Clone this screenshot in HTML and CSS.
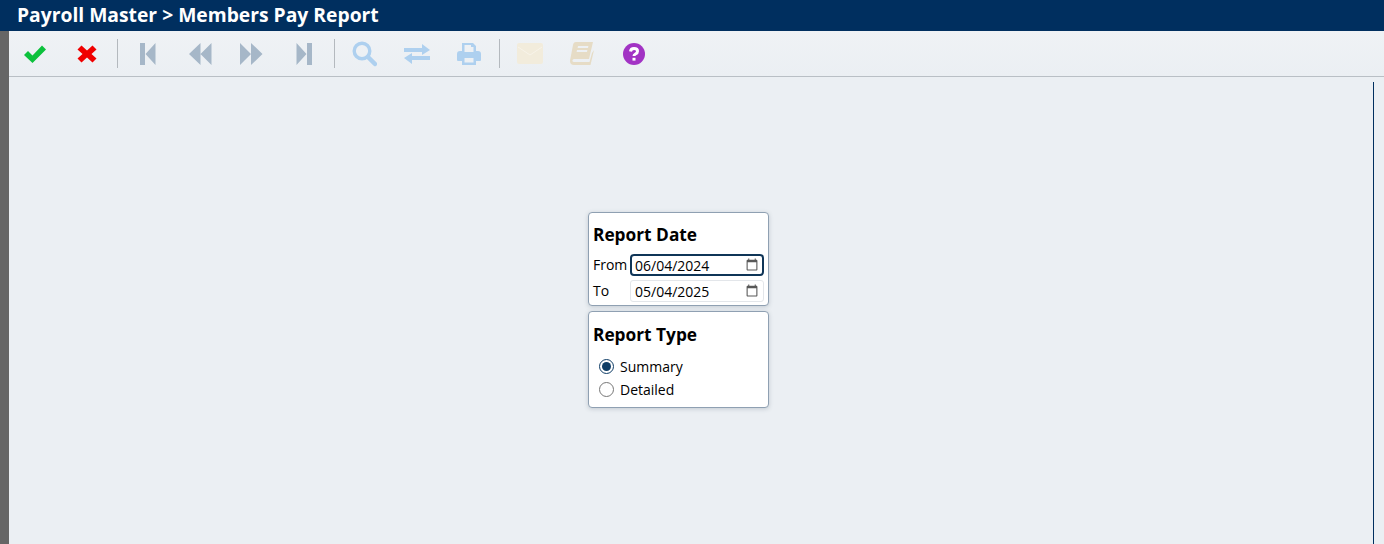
FILE: index.html
```html
<!DOCTYPE html>
<html lang="en">
<head>
<meta charset="utf-8">
<title>Members Pay Report</title>
<link rel="stylesheet" href="styles.css">
</head>
<body>
<header class="titlebar">Payroll Master &gt; Members Pay Report</header>
<div class="shell">
  <aside class="rail"></aside>
  <div class="workspace">
    <nav class="toolbar">
      <span class="tool"><svg viewBox="0 0 24 20" width="24" height="20"><path class="ok" d="M1 11 L5 7 L9.5 11.5 L19 1.5 L23 5.5 L9.5 19 Z"/></svg></span>
      <span class="tool"><svg viewBox="0 0 20 18" width="20" height="18"><path class="cancel" d="M4.5 0.5 L10 5.5 L15.5 0.5 L19.5 4.5 L14.5 9 L19.5 13.5 L15.5 17.5 L10 12.5 L4.5 17.5 L0.5 13.5 L5.5 9 L0.5 4.5 Z"/></svg></span>
      <span class="sep"></span>
      <span class="tool"><svg viewBox="0 0 16 22" width="16" height="22"><path class="nav" d="M0 0 H5 V22 H0 Z M15.500 0 V22 L5.500 11 Z"/></svg></span>
      <span class="tool"><svg viewBox="0 0 24 22" width="24" height="22"><path class="nav" d="M12.500 0 V22 L1 11 Z M23.500 0 V22 L12.500 11 Z"/></svg></span>
      <span class="tool"><svg viewBox="0 0 24 22" width="24" height="22"><path class="nav" d="M0 0 V22 L11 11 Z M11 0 V22 L22.500 11 Z"/></svg></span>
      <span class="tool"><svg viewBox="0 0 16 22" width="16" height="22"><path class="nav" d="M0.500 0 V22 L10.500 11 Z M11 0 H16 V22 H11 Z"/></svg></span>
      <span class="sep"></span>
      <span class="tool tool-left"><svg viewBox="0 0 25 26" width="25" height="26"><circle class="line-blue" cx="10" cy="10" r="7.800"/><path class="line-blue heavy" d="M16 16 L23 23"/></svg></span>
      <span class="tool"><svg viewBox="0 0 26 20" width="26" height="20"><path class="soft-blue" d="M0 4 H18 V0 L26 6 L18 11 V8 H0 Z M26 12 H8 V9 L0 14 L8 20 V16 H26 Z"/></svg></span>
      <span class="tool"><svg viewBox="0 0 24 22" width="24" height="22"><path class="soft-blue" fill-rule="evenodd" d="M5 0 H16 L19 3 V8 H21 Q24 8 24 11 V17 Q24 18 23 18 H19 V22 H5 V18 H1 Q0 18 0 17 V11 Q0 8 3 8 H5 Z M7.500 2 V9 H16.500 V4 H14 V2 Z M7.500 15 V19.500 H16.500 V15 Z"/></svg></span>
      <span class="sep"></span>
      <span class="tool"><svg viewBox="0 0 26 21" width="26" height="21"><rect class="mail" width="26" height="21" rx="2"/><path class="mail-flap" d="M1 4 L13 12 L25 4"/></svg></span>
      <span class="tool"><svg viewBox="0 0 24 23" width="24" height="23"><path class="book" fill-rule="evenodd" d="M6 0 H23 L19 17 H4 Q2.500 17 2.400 18.500 Q2.400 20 4 20 H19.500 L22 11 L24 8 L20.500 23 H4 Q0 23 0 19 Q0 18 0.500 16 L3 3 Q3.500 0 6 0 Z M8 4 L7.600 6 H18 L18.400 4 Z M7 8 L6.600 10 H17 L17.400 8 Z"/></svg></span>
      <span class="tool"><svg viewBox="0 0 22 22" width="22" height="22"><circle class="help" cx="11" cy="11" r="11"/><path class="help-mark" d="M7.500 8.500 Q7.800 5.500 11 5.500 Q14.500 5.500 14.500 8.200 Q14.500 10 12.500 11 Q11 11.800 11 13"/><rect class="help-dot" x="9.500" y="14.800" width="3" height="2.800"/></svg></span>
    </nav>
    <main class="content">
      <section class="panel panel-date">
        <h2 class="panel-title">Report Date</h2>
        <div class="field">
          <label class="field-label" for="from">From</label>
          <input class="date date-focus" id="from" type="date" value="2024-06-04">
        </div>
        <div class="field">
          <label class="field-label" for="to">To</label>
          <input class="date" id="to" type="date" value="2025-05-04">
        </div>
      </section>
      <section class="panel panel-type">
        <h2 class="panel-title">Report Type</h2>
        <label class="radio-row"><input class="radio" type="radio" name="type" checked>Summary</label>
        <label class="radio-row"><input class="radio" type="radio" name="type">Detailed</label>
      </section>
    </main>
  </div>
</div>
</body>
</html>
```
FILE: styles.css
```css
* { box-sizing: border-box; }
html, body { margin: 0; height: 100%; overflow: hidden; }
body {
  font-family: "Open Sans", "Noto Sans", sans-serif;
  font-size: 14px;
  color: #000;
  background: #ebeff3;
  display: flex;
  flex-direction: column;
}
.titlebar {
  height: 31px;
  flex: none;
  background: #002f5f;
  color: #fff;
  font-size: 19.3px;
  font-weight: 700;
  line-height: 30px;
  padding-left: 17px;
}
.shell { flex: 1; display: flex; min-height: 0; }
.rail { width: 9px; flex: none; background: #666; }
.workspace { flex: 1; display: flex; flex-direction: column; min-width: 0; }
.toolbar {
  height: 46px;
  flex: none;
  display: flex;
  align-items: center;
  border-bottom: 1px solid #b9bfc5;
  background: linear-gradient(#eff2f5, #ebeff3);
}
.tool { width: 52px; height: 45px; display: flex; align-items: center; justify-content: center; }
.tool-left svg { margin-left: -2px; }
.sep { width: 1px; height: 29px; margin: 0 4px; background: #b4b9be; }
.ok { fill: #0cc13c; }
.cancel { fill: #f00000; }
.nav { fill: #a6b7c8; }
.line-blue { fill: none; stroke: #aed0ef; stroke-width: 3.400; }
.heavy { stroke-width: 4.500; stroke-linecap: round; }
.soft-blue { fill: #aed0ef; }
.mail { fill: #f2ecdc; }
.mail-flap { fill: none; stroke: #f8f4ea; stroke-width: 1; }
.book { fill: #e6dcc6; }
.help { fill: #a233c4; }
.help-mark { fill: none; stroke: #fff; stroke-width: 3; }
.help-dot { fill: #fff; }
.content {
  flex: 1;
  margin: 5px 10px 0 0;
  border-right: 1px solid #002f5f;
  padding: 130px 25px 0 0;
  display: flex;
  flex-direction: column;
  align-items: center;
  gap: 5px;
}
.panel {
  width: 181px;
  background: #fff;
  border: 1px solid #8fa0b2;
  border-radius: 4px;
  box-shadow: 0 1px 4px rgba(70, 90, 110, .25);
  padding: 11px 4px 0;
}
.panel-date { height: 94px; padding-top: 10px; }
.panel-type { height: 97px; }
.panel-title { margin: 0 0 5px; font-size: 17.3px; line-height: 24px; font-weight: 700; }
.field { display: flex; align-items: center; height: 26px; }
.field-label { width: 37px; flex: none; line-height: 20px; }
.date {
  width: 134px;
  height: 22px;
  padding: 0 3px 0 4px;
  border: 1px solid #e3e6ea;
  border-radius: 3px;
  background: #fff;
  font: 14px "Open Sans", "Noto Sans", sans-serif;
  color: #000;
}
.date::-webkit-datetime-edit { padding: 0; }
.date::-webkit-datetime-edit-fields-wrapper { padding: 0; }
.date::-webkit-datetime-edit-month-field,
.date::-webkit-datetime-edit-day-field,
.date::-webkit-datetime-edit-year-field { padding: 0; }
.date::-webkit-calendar-picker-indicator { opacity: .65; margin: 0 1px 0 0; padding: 0; width: 14px; height: 14px; }
.date-focus { border: 2px solid #0f3557; border-radius: 4px; padding: 0 2px 0 3px; }
.radio-row { display: flex; align-items: center; height: 23px; padding-left: 6px; gap: 6px; }
.radio { margin: 0; width: 15px; height: 15px; accent-color: #0f3d66; }
.panel-type .panel-title { margin-bottom: 8px; }
```
